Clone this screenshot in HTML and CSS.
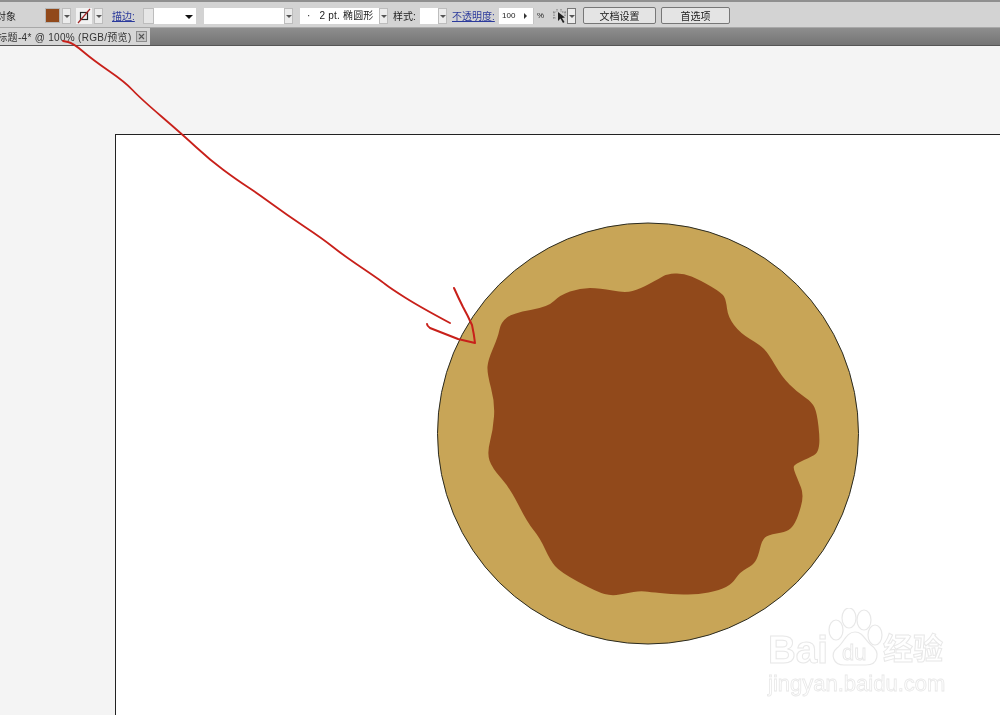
FILE: index.html
```html
<!DOCTYPE html>
<html lang="zh">
<head>
<meta charset="utf-8" />
<title>未标题-4</title>
<link rel="stylesheet" href="styles.css">
</head>
<body>
  <header class="control-bar">
    <span class="label label-object">对象</span>
    <div class="combo combo-fill">
      <span class="swatch"></span>
      <span class="drop"></span>
    </div>
    <div class="combo combo-stroke">
      <span class="stroke-box">
        <svg width="16" height="16" viewBox="0 0 16 16">
          <rect x="4.5" y="4.5" width="7" height="7" fill="none" stroke="#222" stroke-width="1.2"/>
          <path d="M2 15 L14 1" stroke="#a02525" stroke-width="1.2"/>
        </svg>
      </span>
      <span class="drop"></span>
    </div>
    <a class="label link link-stroke">描边:</a>
    <div class="weight">
      <span class="spinner"></span>
      <span class="weight-value"><i class="tri"></i></span>
    </div>
    <div class="field field-dash"><span class="drop"></span></div>
    <div class="field field-brush">
      <span class="brush-text"><em>·</em>2 pt. 椭圆形</span>
      <span class="drop"></span>
    </div>
    <span class="label label-style">样式:</span>
    <div class="field field-style"><span class="drop"></span></div>
    <a class="label link link-opacity">不透明度:</a>
    <div class="field field-opacity"><span class="opacity-value">100</span><i class="tri-right"></i></div>
    <span class="percent">%</span>
    <div class="combo combo-wand">
      <svg width="15" height="16" viewBox="0 0 15 16">
        <path d="M1 4h3M1 10h3M2 4v6M5 1v3M9 1v3M10 4h4M13 4v4" stroke="#777" stroke-width="1" fill="none" stroke-dasharray="1.5 1"/>
        <path d="M6 4 L6 13 L8.5 10.5 L11 15 L12.5 14 L10 10 L13 9.5 Z" fill="#222"/>
      </svg>
      <span class="drop drop-wand"></span>
    </div>
    <button class="btn btn-doc">文档设置</button>
    <button class="btn btn-pref">首选项</button>
  </header>

  <nav class="tab-bar">
    <div class="tab">
      <span class="tab-title">未标题-4* @ 100% (RGB/预览)</span>
      <span class="tab-close">
        <svg width="9" height="9" viewBox="0 0 9 9"><path d="M2 2 L7 7 M7 2 L2 7" stroke="#555" stroke-width="1.1"/></svg>
      </span>
    </div>
  </nav>

  <main class="canvas">
    <section class="artboard">
      <svg class="art" viewBox="115 134 885 581">
        <circle cx="648" cy="433.500" r="210.500" fill="#c8a557" stroke="#2a2a20" stroke-width="1"/>
        <path fill="#91491b" d="M499.500 329.500 Q501 322 507 317.500 Q513 313 530.500 310 Q548 307 554 301 Q560 295 570 291.500 Q580 288 590 288 Q600 288 612.500 290.500 Q625 293 632.500 291 Q640 289 650 283.500 Q660 278 663.500 276 Q667 274 675 273.500 Q683 273 691.500 276.500 Q700 280 711 286.500 Q722 293 724 296.500 Q726 300 727 308.500 Q728 317 734 325 Q740 333 750 339 Q760 345 764 349 Q768 353 775 365 Q782 377 789.500 384.500 Q797 392 804.500 397 Q812 402 814.500 407.500 Q817 413 818.500 426.500 Q820 440 819 446 Q818 452 815.500 454 Q813 456 804 460 Q795 464 794 466 Q793 468 795.500 474 Q798 480 801 487.500 Q804 495 801 506 Q798 517 795 522.500 Q792 528 788.500 530 Q785 532 776.500 533.500 Q768 535 765 537.500 Q762 540 760 548.500 Q758 557 755.500 561 Q753 565 746.500 568.500 Q740 572 736 578 Q732 584 726 587 Q720 590 708.500 592.500 Q697 595 683.500 594.500 Q670 594 660 593 Q650 592 645 591.500 Q640 591 633.500 592 Q627 593 619.500 594.500 Q612 596 604.500 594 Q597 592 578.500 582 Q560 572 555 566 Q550 560 545 549 Q540 538 533.500 530 Q527 522 518.500 505 Q510 488 501 478 Q492 468 489.500 460.500 Q487 453 490 441.500 Q493 430 494 416.500 Q495 403 491 388 Q487 373 487.500 366.500 Q488 360 493 348.500 Q498 337 499.500 329.500 Z"/>
      </svg>
    </section>
  </main>

  <!-- hand drawn arrow, runs across tab bar and artboard -->
  <svg class="scribble" viewBox="0 0 1000 715">
    <g fill="none" stroke="#c8201a" stroke-linecap="round" stroke-linejoin="round">
      <path stroke-width="1.800" d="M63 41 L68 42 Q73 43 83 51.500 Q93 60 109 71 Q125 82 132.500 90 Q140 98 161.500 116.500 Q183 135 196.500 147.500 Q210 160 223.500 170 Q237 180 247 186.500 Q257 193 272 204 Q287 215 305 227 Q323 239 333 247 Q343 255 361.500 267.500 Q380 280 385 284 Q390 288 405 297.500 Q420 307 450 323"/>
      <path stroke-width="2" d="M454 288 Q458 297 463 307 Q468 316 472 325 Q474 334 475 343 L458 339 L430 328 Q427 326 427 324"/>
    </g>
  </svg>

  <div class="watermark">
    <div class="wm-top">
      <span class="wm-bai">Bai</span>
      <span class="wm-paw">
        <svg width="55" height="58" viewBox="0 0 55 58">
          <g fill="#fff" stroke="#e8e8e8" stroke-width="1.200">
            <ellipse cx="8" cy="22" rx="7" ry="10"/>
            <ellipse cx="21" cy="10" rx="7" ry="10"/>
            <ellipse cx="36" cy="12" rx="7" ry="10"/>
            <ellipse cx="47" cy="27" rx="7" ry="10"/>
            <path d="M27 24 C35 24 37 32 43 37 C53 44 50 57 38 57 L16 57 C5 57 2 46 9 40 C16 35 18 24 27 24 Z"/>
          </g>
        </svg>
        <span class="wm-du">du</span>
      </span>
      <span class="wm-cn">经验</span>
    </div>
    <div class="wm-url">jingyan.baidu.com</div>
  </div>
</body>
</html>
```

FILE: styles.css
```css
html, body {
  width: 100%;
  height: 100%;
}
body {
  margin: 0;
  overflow: hidden;
  display: flex;
  flex-direction: column;
  background: #f4f4f4;
  font-family: "Liberation Sans", "Noto Sans CJK SC", sans-serif;
  font-size: 10px;
  color: #222;
  filter: blur(0.35px);
}

/* top control bar */
.control-bar {
  flex: none;
  box-sizing: border-box;
  height: 28px;
  display: flex;
  align-items: center;
  padding: 2px 0 0 0;
  background: #d3d3d3;
  border-top: 2px solid #8f8f8f;
  border-bottom: 1px solid #a8a8a8;
}
.label {
  white-space: nowrap;
  font-size: 10px;
}
.label-object {
  margin-left: -4px;
  width: 20px;
}
.link {
  color: #2b3a9c;
  text-decoration: underline;
}
.combo {
  display: flex;
  align-items: center;
  height: 16px;
}
.combo-fill {
  margin-left: 29px;
}
.swatch {
  width: 15px;
  height: 15px;
  background: #91491b;
  border: 1px solid #b5b5b5;
  box-sizing: border-box;
}
.drop {
  position: relative;
  flex: none;
  width: 9px;
  height: 16px;
  margin-left: 2px;
  background: #ececec;
  border: 1px solid #bdbdbd;
  box-sizing: border-box;
}
.drop::after {
  content: "";
  position: absolute;
  left: 1px;
  top: 6px;
  border-left: 3px solid transparent;
  border-right: 3px solid transparent;
  border-top: 3px solid #555;
}
.combo-stroke {
  margin-left: 5px;
}
.stroke-box {
  width: 16px;
  height: 16px;
  background: #f2f2f2;
}
.link-stroke {
  margin-left: 9px;
  width: 23px;
}
.weight {
  display: flex;
  height: 16px;
  margin-left: 8px;
}
.spinner {
  width: 11px;
  box-sizing: border-box;
  background: #e6e6e6;
  border: 1px solid #bdbdbd;
}
.weight-value {
  position: relative;
  width: 42px;
  background: #fff;
}
.tri {
  position: absolute;
  right: 3px;
  top: 7px;
  border-left: 4px solid transparent;
  border-right: 4px solid transparent;
  border-top: 4px solid #111;
}
.field {
  display: flex;
  justify-content: flex-end;
  height: 16px;
  background: #fff;
}
.field .drop {
  margin-left: 0;
}
.field-dash {
  width: 89px;
  margin-left: 8px;
}
.field-brush {
  position: relative;
  width: 88px;
  margin-left: 7px;
}
.brush-text {
  flex: 1;
  font-size: 10px;
  line-height: 16px;
  letter-spacing: 0.200px;
  white-space: nowrap;
}
.brush-text em {
  font-style: normal;
  margin: 0 9px 0 7px;
}
.label-style {
  margin-left: 5px;
  width: 25px;
}
.field-style {
  width: 27px;
  margin-left: 2px;
}
.link-opacity {
  margin-left: 5px;
  width: 44px;
}
.field-opacity {
  position: relative;
  width: 35px;
  margin-left: 3px;
  justify-content: flex-start;
  box-sizing: border-box;
  border-right: 1px solid #c4c4c4;
}
.opacity-value {
  margin-left: 3px;
  font-size: 8px;
  line-height: 16px;
}
.tri-right {
  position: absolute;
  right: 6px;
  top: 5px;
  border-top: 3px solid transparent;
  border-bottom: 3px solid transparent;
  border-left: 3px solid #333;
}
.percent {
  margin-left: 3px;
  width: 8px;
  font-size: 8px;
}
.combo-wand {
  margin-left: 7px;
}
.drop-wand {
  margin-left: 0;
  border-color: #777;
}
.btn {
  height: 17px;
  padding: 0;
  background: #e4e4e4;
  border: 1px solid #777;
  border-radius: 2px;
  font: 10px "Liberation Sans", "Noto Sans CJK SC", sans-serif;
  color: #222;
}
.btn-doc {
  width: 73px;
  margin-left: 7px;
}
.btn-pref {
  width: 69px;
  margin-left: 5px;
}

/* document tabs */
.tab-bar {
  flex: none;
  height: 18px;
  overflow: hidden;
  background: linear-gradient(#8e8e8e, #747474);
  border-bottom: 1px solid #555;
  box-sizing: border-box;
}
.tab {
  display: flex;
  align-items: center;
  width: 150px;
  height: 17px;
  background: #d6d6d6;
  overflow: hidden;
}
.tab-title {
  flex: none;
  margin-left: -13px;
  white-space: nowrap;
  font-size: 10px;
  letter-spacing: 0.300px;
  color: #333;
}
.tab-close {
  flex: none;
  display: flex;
  align-items: center;
  justify-content: center;
  width: 9px;
  height: 9px;
  margin-left: 4px;
  background: #c4c4c4;
  border: 1px solid #8c8c8c;
}

/* canvas */
.canvas {
  flex: 1;
  min-height: 0;
  padding: 88px 0 0 115px;
  overflow: hidden;
}
.artboard {
  height: 100%;
  background: #fff;
  border-left: 1px solid #222;
  border-top: 1px solid #222;
}
.art {
  display: block;
  width: 885px;
  height: 581px;
  margin: -1px 0 0 -1px;
}
.scribble {
  position: absolute;
  left: 0;
  top: 0;
  width: 1000px;
  height: 715px;
  pointer-events: none;
}

/* watermark */
.watermark {
  position: absolute;
  left: 768px;
  top: 608px;
  color: #fff;
}
.wm-top {
  display: flex;
  align-items: flex-end;
  height: 58px;
}
.wm-bai {
  width: 60px;
  font-size: 38.500px;
  line-height: 32px;
  font-weight: bold;
  -webkit-text-stroke: 1px #e8e8e8;
}
.wm-paw {
  position: relative;
  width: 55px;
  height: 58px;
}
.wm-paw svg {
  position: absolute;
  left: 0;
  top: 0;
}
.wm-du {
  position: absolute;
  left: 14px;
  top: 34px;
  font-size: 22px;
  line-height: 22px;
  color: #fff;
  -webkit-text-stroke: 0.800px #e6e6e6;
}
.wm-cn {
  font-size: 30px;
  line-height: 34px;
  font-weight: bold;
  -webkit-text-stroke: 1px #e8e8e8;
}
.wm-url {
  margin-top: 6px;
  font-size: 22px;
  line-height: 24px;
  color: #fff;
  white-space: nowrap;
  -webkit-text-stroke: 0.800px #e8e8e8;
}
```
